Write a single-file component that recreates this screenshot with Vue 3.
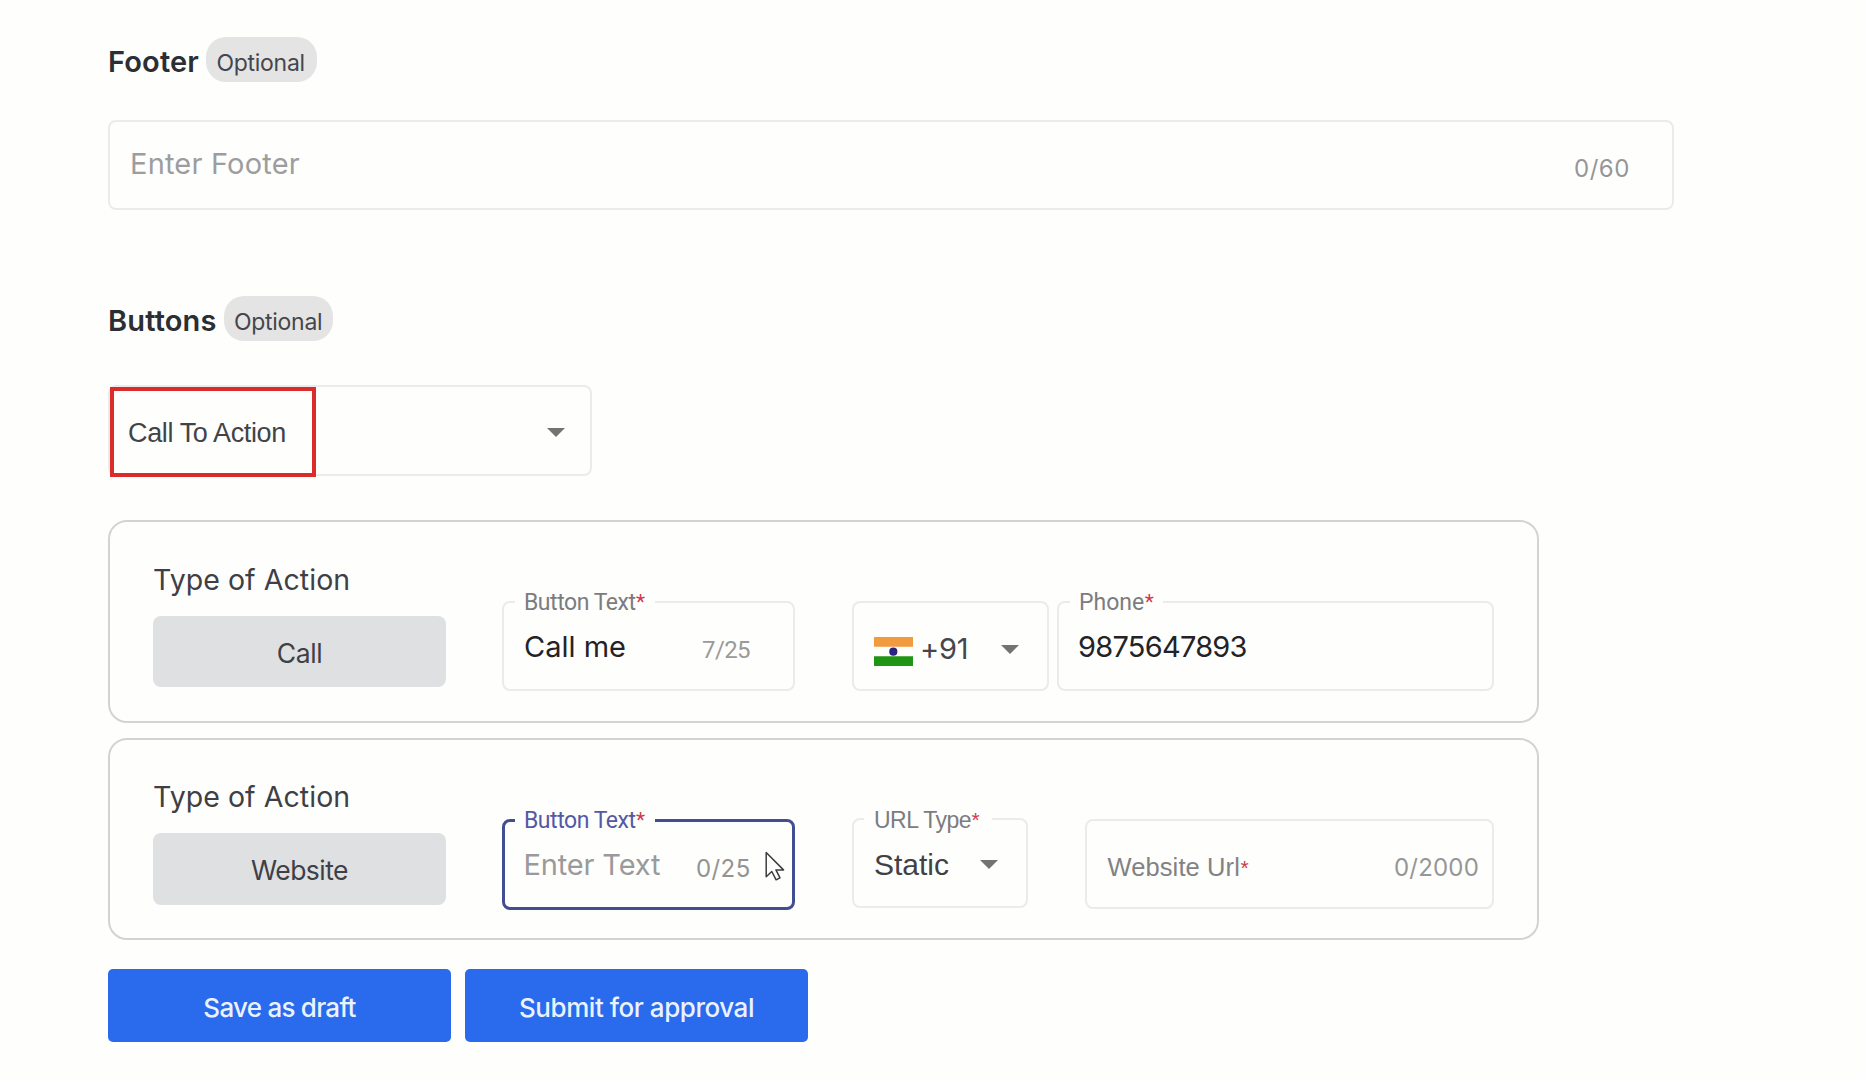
<script setup>
const footer = { placeholder: 'Enter Footer', count: '0/60' }
</script>

<template>
  <main class="page">
    <div class="heading">
      <h2 class="title t-footer">Footer</h2>
      <span class="pill pill-footer">Optional</span>
    </div>
    <div class="field footer-field">
      <span class="t footer-ph">{{ footer.placeholder }}</span>
      <span class="t footer-count">{{ footer.count }}</span>
    </div>

    <div class="heading second">
      <h2 class="title t-buttons">Buttons</h2>
      <span class="pill pill-buttons">Optional</span>
    </div>
    <div class="field select">
      <span class="t select-value">Call To Action</span>
      <svg class="caret select-caret" viewBox="0 0 18 9"><path d="M0 0h18L9 9z" /></svg>
      <span class="highlight"></span>
    </div>

    <section class="card card-call">
      <div class="type">
        <span class="t type-title">Type of Action</span>
        <div class="type-button call">Call</div>
      </div>
      <div class="field text-field">
        <label class="notch roboto n-text">Button Text<i>*</i></label>
        <span class="t value call-me">Call me</span>
        <span class="t count-call">7/25</span>
      </div>
      <div class="field country">
        <svg class="flag" viewBox="0 0 39 29">
          <path d="M0 0h39v9.7H0z" fill="#f19a3e" />
          <path d="M0 19.3h39V29H0z" fill="#209413" />
          <circle cx="19.3" cy="14.7" r="4.1" fill="#2b2282" />
        </svg>
        <span class="t code">+91</span>
        <svg class="caret country-caret" viewBox="0 0 18 9"><path d="M0 0h18L9 9z" /></svg>
      </div>
      <div class="field phone">
        <label class="notch roboto n-phone">Phone<i>*</i></label>
        <span class="t value number">9875647893</span>
      </div>
    </section>

    <section class="card card-web">
      <div class="type">
        <span class="t type-title">Type of Action</span>
        <div class="type-button website">Website</div>
      </div>
      <div class="field text-field focused">
        <label class="notch roboto n-text">Button Text<i>*</i></label>
        <span class="t enter-text">Enter Text</span>
        <span class="t count-web">0/25</span>
        <svg class="cursor" viewBox="0 0 20 30">
          <path d="M1.2 1.5v24.2l5.6-5.2 4.3 8.3 3.9-1.9-4.1-8h7.6z" fill="#fefefd" stroke="#3c3c40" stroke-width="1.5" stroke-linejoin="round" />
        </svg>
      </div>
      <div class="field url-type">
        <label class="notch n-url">URL Type<i>*</i></label>
        <span class="t static">Static</span>
        <svg class="caret url-caret" viewBox="0 0 18 9"><path d="M0 0h18L9 9z" /></svg>
      </div>
      <div class="field website-url">
        <span class="t url-ph">Website Url<i>*</i></span>
        <span class="t url-count">0/2000</span>
      </div>
    </section>

    <div class="actions">
      <button type="button" class="save">Save as draft</button>
      <button type="button" class="submit">Submit for approval</button>
    </div>
  </main>
</template>

<style>
body {
  background: #fefefd;
}
</style>

<style scoped>
.page {
  box-sizing: border-box;
  height: 1080px;
  padding: 37px 0 0 108px;
  background: #fefefd;
  font-family: Inter, "Liberation Sans", sans-serif;
  color: #37373c;
  overflow: hidden;
}
.page * {
  box-sizing: border-box;
}
.t,
.title {
  display: block;
  line-height: 30px;
  white-space: nowrap;
}
i {
  font-style: normal;
  color: #d0394b;
}

.heading {
  display: flex;
  height: 45px;
}
.heading.second {
  margin-top: 86px;
}
.title {
  margin: 9.8px 0 0;
  font-size: 29px;
  font-weight: 600;
  color: #2b2e32;
}
.t-footer {
  width: 97.5px;
  letter-spacing: 0.15px;
}
.t-buttons {
  width: 116px;
  letter-spacing: 0.15px;
}
.pill {
  height: 45px;
  border-radius: 20px;
  background: #e4e4e4;
  color: #45464d;
  font-size: 23px;
  letter-spacing: -0.29px;
  line-height: 52px;
  white-space: nowrap;
}
.pill-footer {
  width: 111.5px;
  padding-left: 11px;
}
.pill-buttons {
  width: 109px;
  padding-left: 10px;
}

.field {
  position: relative;
  display: flex;
  align-items: flex-start;
  border: 2px solid #ebebeb;
  border-radius: 8px;
  height: 90px;
}
.notch {
  position: absolute;
  top: -15px;
  height: 30px;
  padding-left: 10px;
  background: #fefefd;
  color: #7c7c7f;
  font-family: "Liberation Sans", sans-serif;
  font-size: 23px;
  line-height: 30px;
  white-space: nowrap;
}
.roboto {
  font-family: Roboto, "Liberation Sans", sans-serif;
}
.caret {
  display: block;
  width: 18px;
  height: 9px;
  fill: #737373;
}

.footer-field {
  width: 1566px;
  margin-top: 38px;
  padding-left: 20px;
}
.footer-ph {
  width: 1444px;
  margin-top: 27px;
  color: #9d9d9f;
  font-size: 29px;
  letter-spacing: 0.2px;
}
.footer-count {
  margin-top: 32px;
  color: #969696;
  font-size: 24px;
  letter-spacing: 0.5px;
}

.select {
  width: 484px;
  height: 91px;
  margin-top: 44px;
}
.select-value {
  width: 437px;
  margin-top: 30.5px;
  padding-left: 18px;
  color: #414447;
  font-family: "Liberation Sans", sans-serif;
  font-size: 27px;
  letter-spacing: -0.37px;
}
.select-caret {
  margin-top: 41px;
}
.highlight {
  position: absolute;
  left: 0;
  top: 0;
  width: 206px;
  height: 90px;
  border: 4px solid #db2b2b;
}

.card {
  display: flex;
  align-items: flex-start;
  width: 1431px;
  border: 2px solid #d3d3d3;
  border-radius: 19px;
  padding-left: 43px;
}
.card-call {
  height: 203px;
  margin-top: 44px;
}
.card-web {
  height: 202px;
  margin-top: 15px;
}
.type {
  width: 293px;
  margin-right: 56px;
}
.card-call .type {
  margin-top: 43px;
}
.card-web .type {
  margin-top: 42px;
}
.type-title {
  font-size: 28.5px;
  letter-spacing: 0.05px;
  color: #3f3f46;
}
.type-button {
  height: 71px;
  margin-top: 21px;
  border-radius: 8px;
  background: #dfe0e2;
  color: #3f3f46;
  font-size: 26.5px;
  text-align: center;
}
.call {
  line-height: 75px;
  letter-spacing: -0.39px;
}
.website {
  height: 72px;
  line-height: 74px;
  letter-spacing: -0.54px;
}

.text-field {
  width: 293px;
  margin: 79px 57px 0 0;
}
.n-text {
  left: 11px;
  width: 140px;
  padding-left: 9px;
  letter-spacing: -0.46px;
}
.notch i,
.url-ph i {
  display: inline-block;
  margin-left: 0.5px;
  font-size: 21px;
  line-height: 20px;
  vertical-align: 1px;
}
.value {
  color: #232327;
}
.call-me {
  width: 198px;
  margin-top: 28.5px;
  padding-left: 20px;
  font-size: 29px;
  letter-spacing: 0;
}
.count-call {
  margin-top: 32px;
  color: #9a9a9a;
  font-family: Roboto, sans-serif;
  font-size: 24px;
  letter-spacing: -0.6px;
}

.country {
  width: 197px;
  margin: 79px 8px 0 0;
}
.flag {
  width: 39px;
  height: 29px;
  margin: 34px 0 0 20px;
}
.code {
  width: 88px;
  margin-top: 31px;
  padding-left: 7px;
  font-size: 29px;
  letter-spacing: -0.2px;
  color: #46464b;
}
.country-caret {
  margin-top: 41.5px;
}
.phone {
  width: 437px;
  margin-top: 79px;
}
.n-phone {
  left: 11px;
  width: 93px;
  padding-left: 9px;
}
.number {
  margin-top: 29px;
  padding-left: 19px;
  font-size: 29px;
  letter-spacing: -0.75px;
}

.focused {
  margin-top: 79px;
  height: 91px;
  border: 3px solid #424d92;
}
.focused .notch {
  left: 10px;
  top: -16px;
  color: #5559a3;
}
.enter-text {
  width: 191px;
  margin-top: 28px;
  padding-left: 18.5px;
  color: #9a9a9b;
  font-size: 29px;
  letter-spacing: -0.15px;
}
.count-web {
  margin-top: 32px;
  color: #939394;
  font-size: 24px;
  letter-spacing: 0.4px;
}
.cursor {
  position: absolute;
  left: 260px;
  top: 29px;
  width: 20px;
  height: 30px;
}
.url-type {
  width: 176px;
  margin: 78px 57px 0 0;
}
.n-url {
  left: 10px;
  width: 128px;
  letter-spacing: -0.5px;
}
.static {
  width: 126px;
  margin-top: 29.5px;
  padding-left: 20px;
  color: #414144;
  font-family: "Liberation Sans", sans-serif;
  font-size: 30px;
}
.url-caret {
  margin-top: 40px;
}
.website-url {
  width: 409px;
  margin-top: 79px;
}
.url-ph {
  width: 307px;
  margin-top: 30.5px;
  padding-left: 20.5px;
  color: #828284;
  font-family: "Liberation Sans", sans-serif;
  font-size: 25.5px;
  letter-spacing: 0.1px;
}
.url-count {
  margin-top: 31.5px;
  color: #969697;
  font-size: 24px;
  letter-spacing: 0.2px;
}

.actions {
  display: flex;
  gap: 14px;
  margin-top: 29px;
}
.actions button {
  width: 343px;
  height: 73px;
  padding: 4px 0 0;
  border: 0;
  border-radius: 5px;
  background: #2a6aec;
  color: #e9f3ff;
  font-family: inherit;
  font-size: 26px;
  font-weight: 500;
}
.save {
  letter-spacing: -0.75px;
}
.submit {
  letter-spacing: -0.45px;
}
</style>
